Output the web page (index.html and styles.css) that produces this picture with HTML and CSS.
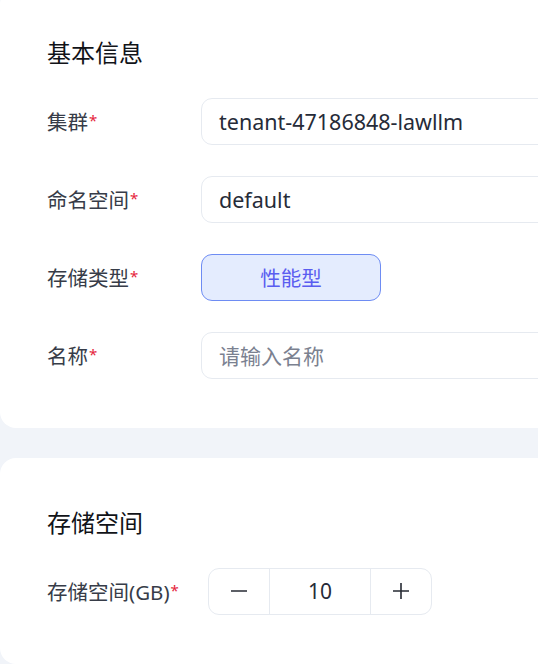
FILE: index.html
```html
<!DOCTYPE html>
<html lang="zh-CN">
<head>
<meta charset="utf-8">
<title>创建存储</title>
<link rel="stylesheet" href="styles.css">
</head>
<body>
<div class="page">
  <section class="card card-first">
    <h2 class="card-title">基本信息</h2>
    <div class="form">
      <div class="row">
        <div class="label">集群<span class="req">*</span></div>
        <div class="field">tenant-47186848-lawllm</div>
      </div>
      <div class="row">
        <div class="label">命名空间<span class="req">*</span></div>
        <div class="field">default</div>
      </div>
      <div class="row">
        <div class="label">存储类型<span class="req">*</span></div>
        <div class="option active">性能型</div>
      </div>
      <div class="row">
        <div class="label">名称<span class="req">*</span></div>
        <div class="field placeholder">请输入名称</div>
      </div>
    </div>
  </section>
  <section class="card">
    <h2 class="card-title">存储空间</h2>
    <div class="form">
      <div class="row">
        <div class="label">存储空间(GB)<span class="req">*</span></div>
        <div class="stepper">
          <div class="step-btn">
            <svg width="18" height="18" viewBox="0 0 18 18"><path d="M1 9h16" stroke="#262a33" stroke-width="1.6" fill="none"/></svg>
          </div>
          <div class="step-value">10</div>
          <div class="step-btn">
            <svg width="18" height="18" viewBox="0 0 18 18"><path d="M1 9h16M9 1v16" stroke="#262a33" stroke-width="1.6" fill="none"/></svg>
          </div>
        </div>
      </div>
    </div>
  </section>
</div>
</body>
</html>
```

FILE: styles.css
```css
* { box-sizing: border-box; }

html, body {
  margin: 0;
  padding: 0;
  background: #f1f4f9;
  overflow: hidden;
}

body {
  font-family: "Noto Sans", "Noto Sans CJK SC", sans-serif;
  color: #3a3f4b;
  width: 538px;
  height: 664px;
}

.page {
  width: 538px;
  margin-top: -12.5px;
  display: flex;
  flex-direction: column;
  gap: 30px;
}

.card {
  background: #ffffff;
  border-radius: 16px 0 0 16px;
  padding: 48px 0 49px 47px;
  overflow: hidden;
}

.card-title {
  margin: 0 0 28px 0;
  font-size: 24px;
  line-height: 34px;
  font-weight: 400;
  color: #111318;
}

.form {
  display: flex;
  flex-direction: column;
  gap: 31px;
}

.row {
  display: flex;
  align-items: center;
  height: 47px;
}

.label {
  width: 154px;
  flex: none;
  font-size: 20.5px;
  color: #373c48;
  white-space: nowrap;
}

.req {
  color: #e5243b;
  font-size: 15px;
  vertical-align: 4px;
  margin-left: 1px;
}

.field {
  flex: none;
  width: 420px;
  height: 47px;
  border: 1.5px solid #e6eaf0;
  border-radius: 11px;
  padding: 0 17px;
  display: flex;
  align-items: center;
  font-size: 21.5px;
  color: #262b38;
}

.field.placeholder {
  color: #7b8190;
  font-size: 21px;
}

.option {
  flex: none;
  width: 180px;
  height: 47px;
  border: 1px solid #6e8cf3;
  border-radius: 11px;
  background: #e4ecfe;
  color: #5a5df0;
  font-size: 20.5px;
  display: flex;
  align-items: center;
  justify-content: center;
}

.stepper {
  flex: none;
  margin-left: 7px;
  width: 224px;
  height: 47px;
  border: 1.5px solid #e6eaf0;
  border-radius: 11px;
  display: flex;
}

.step-btn {
  width: 60px;
  display: flex;
  align-items: center;
  justify-content: center;
}

.step-value {
  flex: 1;
  border-left: 1px solid #e6eaf0;
  border-right: 1px solid #e6eaf0;
  display: flex;
  align-items: center;
  justify-content: center;
  font-size: 21px;
  color: #262b38;
}
```
